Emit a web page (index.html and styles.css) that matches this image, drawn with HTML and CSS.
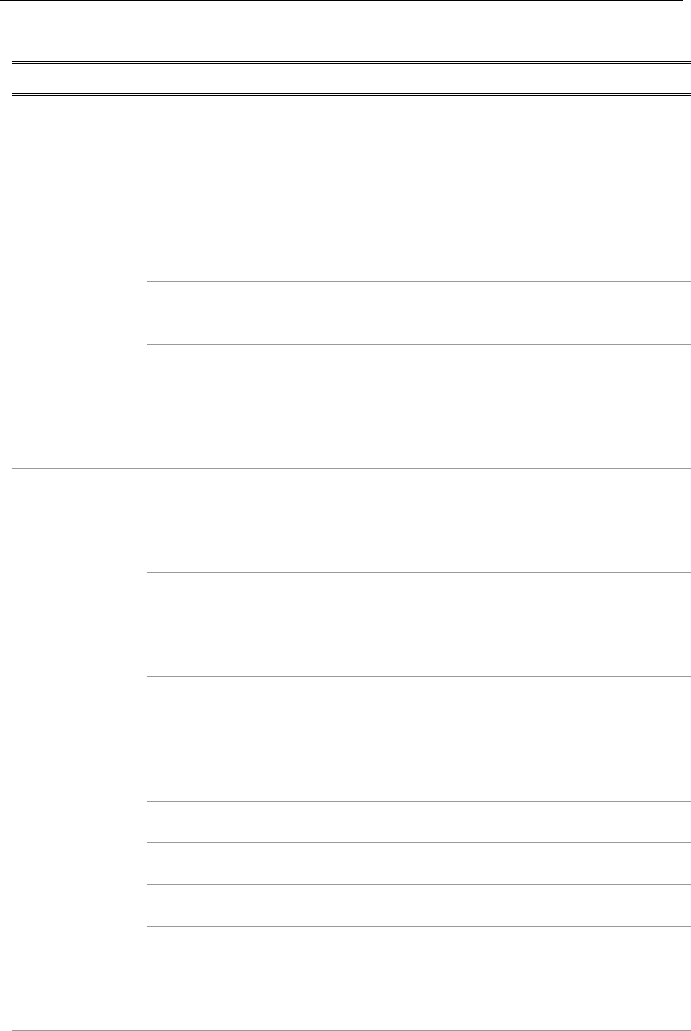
FILE: index.html
```html
<!DOCTYPE html>
<html lang="en">
<head>
    <meta charset="UTF-8">
    <meta name="viewport" content="width=device-width, initial-scale=1.0">
    <title>Table</title>
    <link rel="stylesheet" href="styles.css">
</head>
<body>
    <div class="page-rule"></div>

    <div class="sheet">
        <div class="sheet-head"></div>

        <!-- first group -->
        <div class="group">
            <div class="group-label"></div>
            <div class="group-rows">
                <div class="row h185"></div>
                <div class="row h62"></div>
                <div class="row h123"></div>
            </div>
        </div>

        <!-- second group -->
        <div class="group">
            <div class="group-label"></div>
            <div class="group-rows">
                <div class="row h103"></div>
                <div class="row h103"></div>
                <div class="row h124"></div>
                <div class="row h40"></div>
                <div class="row h41"></div>
                <div class="row h41"></div>
                <div class="row h103"></div>
            </div>
        </div>
    </div>
</body>
</html>
```

FILE: styles.css
```css
body {
    font-family: "Liberation Serif", serif;
    background-color: #fff;
    margin: 0;
}

.page-rule {
    width: 683px;
    border-top: 1px solid #000;
}

.sheet {
    margin: 60px 0 0 12px;
}

.sheet-head {
    height: 29px;
    border-top: 3px double #000;
    border-bottom: 3px double #000;
}

.group {
    display: flex;
    border-bottom: 1px solid #999;
}

.group-label {
    width: 135px;
    flex-shrink: 0;
}

.group-rows {
    flex: 1;
    display: flex;
    flex-direction: column;
}

.row {
    border-bottom: 1px solid #999;
}

.row:last-child {
    border-bottom: none;
}

.h185 { height: 185px; }
.h124 { height: 124px; }
.h123 { height: 123px; }
.h103 { height: 103px; }
.h62 { height: 62px; }
.h41 { height: 41px; }
.h40 { height: 40px; }
```
